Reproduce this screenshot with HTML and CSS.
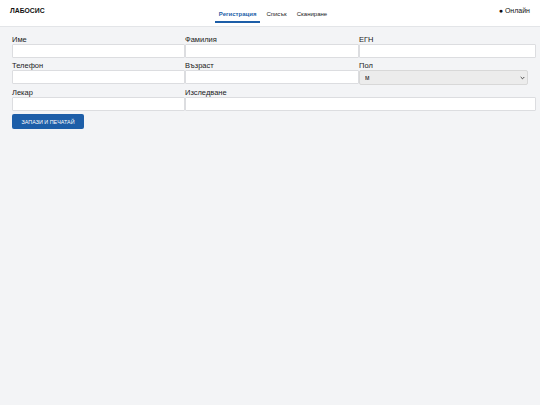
FILE: index.html
```html
<!DOCTYPE html>
<html lang="bg">
<head>
<meta charset="utf-8">
<link rel="stylesheet" href="styles.css">
</head>
<body>
<header class="topbar">
  <div class="logo">ЛАБОСИС</div>
  <nav class="tabs">
    <a class="tab active">Регистрация</a>
    <a class="tab">Списък</a>
    <a class="tab">Сканиране</a>
  </nav>
  <div class="status">● Онлайн</div>
</header>
<main class="content">
  <form class="form">
    <div class="field"><label>Име</label><input type="text"></div>
    <div class="field"><label>Фамилия</label><input type="text"></div>
    <div class="field"><label>ЕГН</label><input type="text"></div>
    <div class="field"><label>Телефон</label><input type="text"></div>
    <div class="field"><label>Възраст</label><input type="text"></div>
    <div class="field"><label>Пол</label>
      <div class="select-wrap">
        <select><option>м</option><option>ж</option></select>
        <svg class="chev" width="5" height="4" viewBox="0 0 5 4"><path d="M0.7 1 L2.5 2.8 L4.3 1" fill="none" stroke="#333" stroke-width="0.9"/></svg>
      </div>
    </div>
    <div class="field"><label>Лекар</label><input type="text"></div>
    <div class="field wide"><label>Изследване</label><input type="text"></div>
  </form>
  <button class="btn" type="button">ЗАПАЗИ И ПЕЧАТАЙ</button>
</main>
</body>
</html>
```
FILE: styles.css
```css
* { box-sizing: border-box; }
html, body { margin: 0; padding: 0; }
body {
  background: #f3f4f6;
  font-family: "Liberation Sans", Arial, sans-serif;
  color: #111;
  width: 540px;
  height: 405px;
}
.topbar {
  display: grid;
  grid-template-columns: 1fr auto 1fr;
  align-items: start;
  background: #fff;
  border-bottom: 1px solid #e3e5e8;
  height: 27px;
  padding: 0 10px;
}
.logo {
  font-weight: bold;
  font-size: 6.8px;
  line-height: 8px;
  padding-top: 7px;
}
.tabs {
  display: flex;
  gap: 2px;
  transform: translateX(3px);
}
.tab {
  font-size: 6px;
  line-height: 7px;
  padding: 11px 4px 3px;
  border-bottom: 2px solid transparent;
  color: #222;
}
.tab.active {
  color: #1d5ea8;
  border-bottom-color: #1d5ea8;
  font-weight: bold;
}
.status {
  justify-self: end;
  font-size: 7px;
  line-height: 8px;
  padding-top: 7px;
  color: #111;
}
.content {
  padding: 8px 4px 0 12px;
}
.form {
  display: grid;
  grid-template-columns: 173px 174px 177px;
  row-gap: 3px;
  width: 524px;
}
.field {
  display: flex;
  flex-direction: column;
}
.field.wide { grid-column: span 2; }
.field label {
  font-size: 7.5px;
  line-height: 9px;
  font-weight: normal;
  color: #1a1a1a;
}
.field input {
  height: 14px;
  border: 1px solid #dcdde0;
  background: #fff;
  margin: 0;
  padding: 0 4px;
  font-size: 7px;
  border-radius: 1px;
}
.select-wrap {
  position: relative;
  width: 169px;
}
.select-wrap select {
  -webkit-appearance: none;
  appearance: none;
  display: block;
  height: 15px;
  width: 169px;
  border: 1px solid #d8d8d8;
  background: #ececec;
  border-radius: 2px;
  font-size: 6.5px;
  font-family: "Liberation Sans", Arial, sans-serif;
  padding: 0 5px;
  color: #222;
  margin: 0;
}
.chev {
  position: absolute;
  right: 3px;
  top: 6px;
}
.btn {
  margin-top: 3px;
  height: 15px;
  width: 72px;
  padding: 0;
  background: #1d5ea8;
  color: #fff;
  border: none;
  border-radius: 2px;
  font-family: "Liberation Sans", Arial, sans-serif;
  font-size: 5.4px;
  display: block;
}
```
